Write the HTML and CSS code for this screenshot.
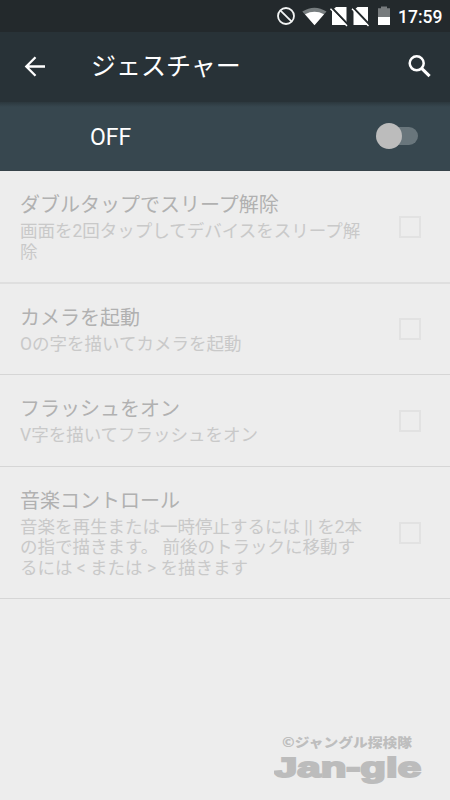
FILE: index.html
```html
<!DOCTYPE html>
<html lang="ja">
<head>
<meta charset="utf-8">
<title>ジェスチャー</title>
<link rel="stylesheet" href="styles.css">
</head>
<body>
<div class="status">
  <svg class="status-icons" width="120" height="32" viewBox="0 0 120 32">
    <g fill="none" stroke="#f2f4f4" stroke-width="1.8"><circle cx="16" cy="16" r="8"/><path d="M10.3 10.3 21.7 21.7"/></g>
    <path d="M32.3 11.5Q44.500 3.800 56.500 11.500L44.500 25Z" fill="#777d7f"/>
    <path d="M35 14.200Q44.500 9.500 54 14.200L44.500 25.200Z" fill="#fff"/>
    <path d="M66 7h10.500v18H62V10.500Z" fill="#fff"/>
    <path d="M87.500 7H98v18H83.500V10.500Z" fill="#fff"/>
    <path d="M61.800 7.800 78.300 25M83.300 7.800 99.800 25" stroke="#23292c" stroke-width="2.200"/>
    <path d="M60.500 8.700 77 25.900M82 8.700 98.500 25.900" stroke="#fff" stroke-width="1.400"/>
    <path d="M108 8.300h3V6.500h6v1.800h3V17h-12Z" fill="#777b7d"/>
    <path d="M108 17h12v8h-12Z" fill="#fff"/>
  </svg>
  <span class="clock">17:59</span>
</div>
<header class="toolbar">
  <svg class="back" width="24" height="24" viewBox="0 0 24 24"><path d="M22 11.500H3.500M12.500 2.300 3.300 11.500l9.200 9.200" fill="none" stroke="#fff" stroke-width="2.300"/></svg>
  <h1 class="heading">ジェスチャー</h1>
  <svg class="search" width="26" height="26" viewBox="0 0 26 26"><circle cx="9.700" cy="9.300" r="7" fill="none" stroke="#fff" stroke-width="2.500"/><path d="m14.900 14.700 7.700 7.500" stroke="#fff" stroke-width="3.100"/></svg>
</header>
<div class="master"><span class="state">OFF</span><div class="switch"><i class="thumb"></i></div></div>
<main>
  <section class="row row-a"><div class="copy"><h2>ダブルタップでスリープ解除</h2><p>画面を2回タップしてデバイスをスリープ解<br>除</p></div><i class="box"></i></section>
  <section class="row row-b"><div class="copy"><h2>カメラを起動</h2><p>Oの字を描いてカメラを起動</p></div><i class="box"></i></section>
  <section class="row row-c"><div class="copy"><h2>フラッシュをオン</h2><p>V字を描いてフラッシュをオン</p></div><i class="box"></i></section>
  <section class="row row-d"><div class="copy"><h2>音楽コントロール</h2><p>音楽を再生または一時停止するには || を2本<br>の指で描きます。 前後のトラックに移動す<br>るには &lt; または &gt; を描きます</p></div><i class="box"></i></section>
</main>
<footer class="credit">
  <svg width="160" height="60" viewBox="0 0 160 60">
    <text class="credit-name" x="8" y="16.500" textLength="130" lengthAdjust="spacingAndGlyphs">©ジャングル探検隊</text>
    <text class="credit-brand" x="0" y="47" textLength="147" lengthAdjust="spacingAndGlyphs">Jan-gle</text>
  </svg>
</footer>
</body>
</html>
```
FILE: styles.css
```css
* { box-sizing: border-box; }
body {
  margin: 0;
  width: 450px;
  height: 800px;
  display: flex;
  flex-direction: column;
  overflow: hidden;
  background: #ededed;
  font-family: Roboto, "Noto Sans CJK JP", sans-serif;
}
h1, h2, p { margin: 0; font-weight: 400; white-space: nowrap; }
svg { display: block; flex: none; }
.status {
  height: 32px;
  flex: none;
  display: flex;
  justify-content: flex-end;
  padding-right: 8px;
  background: #23292c;
}
.status-icons { margin-right: 8px; overflow: visible; }
.clock {
  width: 44px;
  color: #fff;
  font-size: 17.5px;
  font-weight: 500;
  line-height: 34px;
  white-space: nowrap;
}
.toolbar {
  height: 70px;
  flex: none;
  display: flex;
  align-items: center;
  padding: 0 17px 0 23px;
  background: #283237;
}
.heading {
  flex: 1;
  margin-left: 44px;
  color: #fff;
  font-size: 25px;
  line-height: 36px;
}
.master {
  height: 69px;
  flex: none;
  display: flex;
  align-items: center;
  justify-content: space-between;
  padding: 0 32px 0 90px;
  background: linear-gradient(#2c383e, #37474f 5px);
  border-bottom: 1px solid #37434a;
  color: #fff;
  font-size: 23px;
}
.state { padding-top: 2px; }
.switch {
  width: 40px;
  height: 18px;
  border-radius: 9px;
  background: #69767c;
  display: flex;
  align-items: center;
}
.thumb {
  width: 26px;
  height: 26px;
  margin-left: -2px;
  flex: none;
  border-radius: 50%;
  background: #bcbcbc;
}
main { flex: none; }
.row {
  display: flex;
  align-items: center;
  justify-content: space-between;
  padding: 0 29px 0 20px;
  border-bottom: 1px solid #d6d6d6;
}
.copy { padding-top: 2px; }
.row-a { height: 113px; border-bottom: 2px solid #dfdfdf; }
.row-a .copy { padding-top: 3px; }
.row-b { height: 91px; }
.row-c { height: 92px; }
.row-d { height: 132px; }
h2 { color: #b1b1b1; font-size: 20px; line-height: 25px; padding-bottom: 3px; }
p { color: #c9c9c9; font-size: 17.5px; line-height: 20.6px; }
.box { width: 22px; height: 22px; flex: none; border: 2px solid #e2e2e2; }
.credit { margin: auto 16px 10px auto; }
.credit-name {
  font: 900 13px "Noto Sans CJK JP", sans-serif;
  fill: #bebebe;
}
.credit-brand {
  font: 700 28px "Liberation Sans", sans-serif;
  fill: #bcbcbc;
  stroke: #bcbcbc;
  stroke-width: 2px;
}
```
